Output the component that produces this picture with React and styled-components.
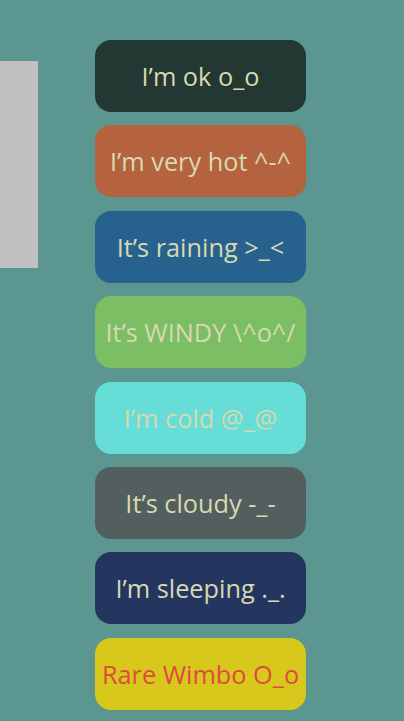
import React from "react";
import styled, { createGlobalStyle } from "styled-components";

const Global = createGlobalStyle`
  html, body { margin: 0; padding: 0; background: #5b9691; }
  body { font-family: "Open Sans", "Noto Sans", sans-serif; }
`;

const Page = styled.div`
  position: relative;
  width: 404px;
  height: 721px;
  background: #5b9691;
  overflow: hidden;
`;

const SidePanel = styled.div`
  position: absolute;
  left: 0;
  top: 61px;
  width: 38px;
  height: 207px;
  background: #c0c0c0;
`;

const List = styled.div`
  display: flex;
  flex-direction: column;
  align-items: center;
  gap: 13.4px;
  padding-top: 40px;
  padding-left: 95px;
  width: 211px;
`;

const Mood = styled.button`
  width: 211px;
  height: 72px;
  border: none;
  border-radius: 16px;
  background: ${(p) => p.$bg};
  color: ${(p) => p.$fg || "#d7d9b1"};
  font-family: "Open Sans", "Noto Sans", sans-serif;
  font-size: 25.3px;
  font-weight: 400;
  display: flex;
  align-items: center;
  justify-content: center;
  padding: 0;
  white-space: nowrap;
  cursor: pointer;
`;

const moods = [
  { text: "I’m ok o_o", bg: "#233733" },
  { text: "I’m very hot ^-^", bg: "#b5623f" },
  { text: "It’s raining >_<", bg: "#27628f" },
  { text: "It’s WINDY \\^o^/", bg: "#7bbe63" },
  { text: "I’m cold @_@", bg: "#66ddd6" },
  { text: "It’s cloudy -_-", bg: "#535f5e" },
  { text: "I’m sleeping ._.", bg: "#243660" },
  { text: "Rare Wimbo O_o", bg: "#d8c81b", fg: "#df4a3e" },
];

export default function App() {
  return (
    <Page>
      <Global />
      <SidePanel />
      <List>
        {moods.map((m) => (
          <Mood key={m.text} $bg={m.bg} $fg={m.fg}>
            {m.text}
          </Mood>
        ))}
      </List>
    </Page>
  );
}
